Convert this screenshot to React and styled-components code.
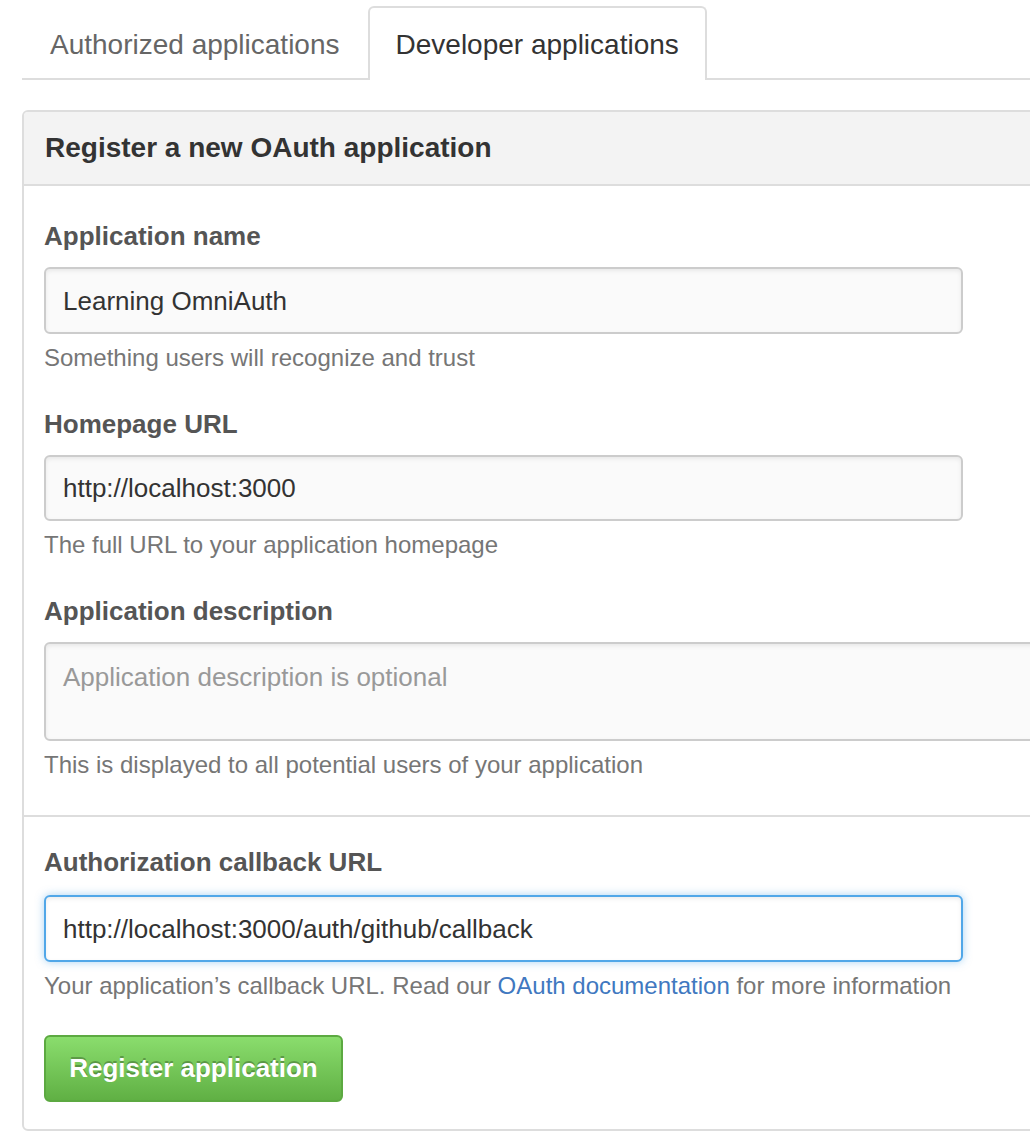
import React from "react";
import styled, { createGlobalStyle } from "styled-components";

const GlobalStyle = createGlobalStyle`
  html, body {
    margin: 0;
    padding: 0;
    background: #fff;
    overflow: hidden;
  }
  body {
    font-family: "Liberation Sans", Arial, Helvetica, sans-serif;
    color: #333;
  }
`;

const Page = styled.div`
  padding: 6px 0 0 22px;
  width: 1060px;
`;

const TabNav = styled.div`
  display: flex;
  border-bottom: 2px solid #ddd;
`;

const Tab = styled.div`
  padding: 2px 26px 0;
  height: 70px;
  display: flex;
  align-items: center;
  font-size: 28px;
  color: ${(p) => (p.active ? "#333" : "#666")};
  background: ${(p) => (p.active ? "#fff" : "transparent")};
  border: 2px solid ${(p) => (p.active ? "#ddd" : "transparent")};
  border-bottom: none;
  border-radius: 6px 6px 0 0;
  margin-bottom: -2px;
`;

const Panel = styled.div`
  margin-top: 30px;
  border: 2px solid #ddd;
  border-radius: 6px;
  width: 1040px;
`;

const PanelHeader = styled.div`
  height: 72px;
  display: flex;
  align-items: center;
  padding: 0 21px;
  background: #f3f3f3;
  border-bottom: 2px solid #ddd;
  border-radius: 4px 4px 0 0;
  font-size: 28px;
  font-weight: bold;
  color: #333;
`;

const Section = styled.div`
  padding: ${(p) => p.pad};
  display: flex;
  flex-direction: column;
  gap: 31px;
  border-top: ${(p) => (p.divided ? "2px solid #ddd" : "none")};
`;

const Group = styled.div`
  display: flex;
  flex-direction: column;
`;

const Label = styled.label`
  font-size: 26px;
  line-height: 36px;
  font-weight: bold;
  color: #555;
  margin-bottom: ${(p) => p.gap || "13px"};
`;

const Input = styled.div`
  box-sizing: border-box;
  width: ${(p) => p.width || "919px"};
  height: ${(p) => p.height || "67px"};
  padding: ${(p) => (p.multi ? "16px 17px" : "0 17px")};
  display: flex;
  align-items: ${(p) => (p.multi ? "flex-start" : "center")};
  font-size: 26px;
  line-height: 34px;
  color: ${(p) => (p.placeholder ? "#999" : "#333")};
  background: ${(p) => (p.focus ? "#fff" : "#fafafa")};
  border: 2px solid ${(p) => (p.focus ? "#51a7e8" : "#ccc")};
  border-radius: 6px;
  box-shadow: ${(p) =>
    p.focus
      ? "inset 0 2px 4px rgba(0,0,0,0.075), 0 0 8px rgba(81,167,232,0.5)"
      : "inset 0 2px 4px rgba(0,0,0,0.075)"};
`;

const Note = styled.p`
  margin: 7px 0 0;
  font-size: 24px;
  line-height: 34px;
  color: #767676;
`;

const Link = styled.a`
  color: #4078c0;
  text-decoration: none;
`;

const Button = styled.button`
  align-self: flex-start;
  width: 299px;
  height: 67px;
  margin-top: 1px;
  font-family: inherit;
  font-size: 26px;
  font-weight: bold;
  color: #fff;
  text-shadow: 0 -2px 0 rgba(0, 0, 0, 0.25);
  background: linear-gradient(#8add6d, #60b044);
  border: 2px solid #5ca941;
  border-radius: 6px;
`;

export default function App() {
  return (
    <>
      <GlobalStyle />
      <Page>
        <TabNav>
          <Tab>Authorized applications</Tab>
          <Tab active>Developer applications</Tab>
        </TabNav>
        <Panel>
          <PanelHeader>Register a new OAuth application</PanelHeader>
          <Section pad="32px 20px 33px">
            <Group>
              <Label>Application name</Label>
              <Input>Learning OmniAuth</Input>
              <Note>Something users will recognize and trust</Note>
            </Group>
            <Group>
              <Label>Homepage URL</Label>
              <Input height="66px">http://localhost:3000</Input>
              <Note>The full URL to your application homepage</Note>
            </Group>
            <Group>
              <Label>Application description</Label>
              <Input multi placeholder width="1020px" height="99px">
                Application description is optional
              </Input>
              <Note>This is displayed to all potential users of your application</Note>
            </Group>
          </Section>
          <Section divided pad="27px 20px 27px">
            <Group>
              <Label gap="15px">Authorization callback URL</Label>
              <Input focus>http://localhost:3000/auth/github/callback</Input>
              <Note>
                Your application’s callback URL. Read our{" "}
                <Link href="#">OAuth documentation</Link> for more information
              </Note>
            </Group>
            <Button>Register application</Button>
          </Section>
        </Panel>
      </Page>
    </>
  );
}
